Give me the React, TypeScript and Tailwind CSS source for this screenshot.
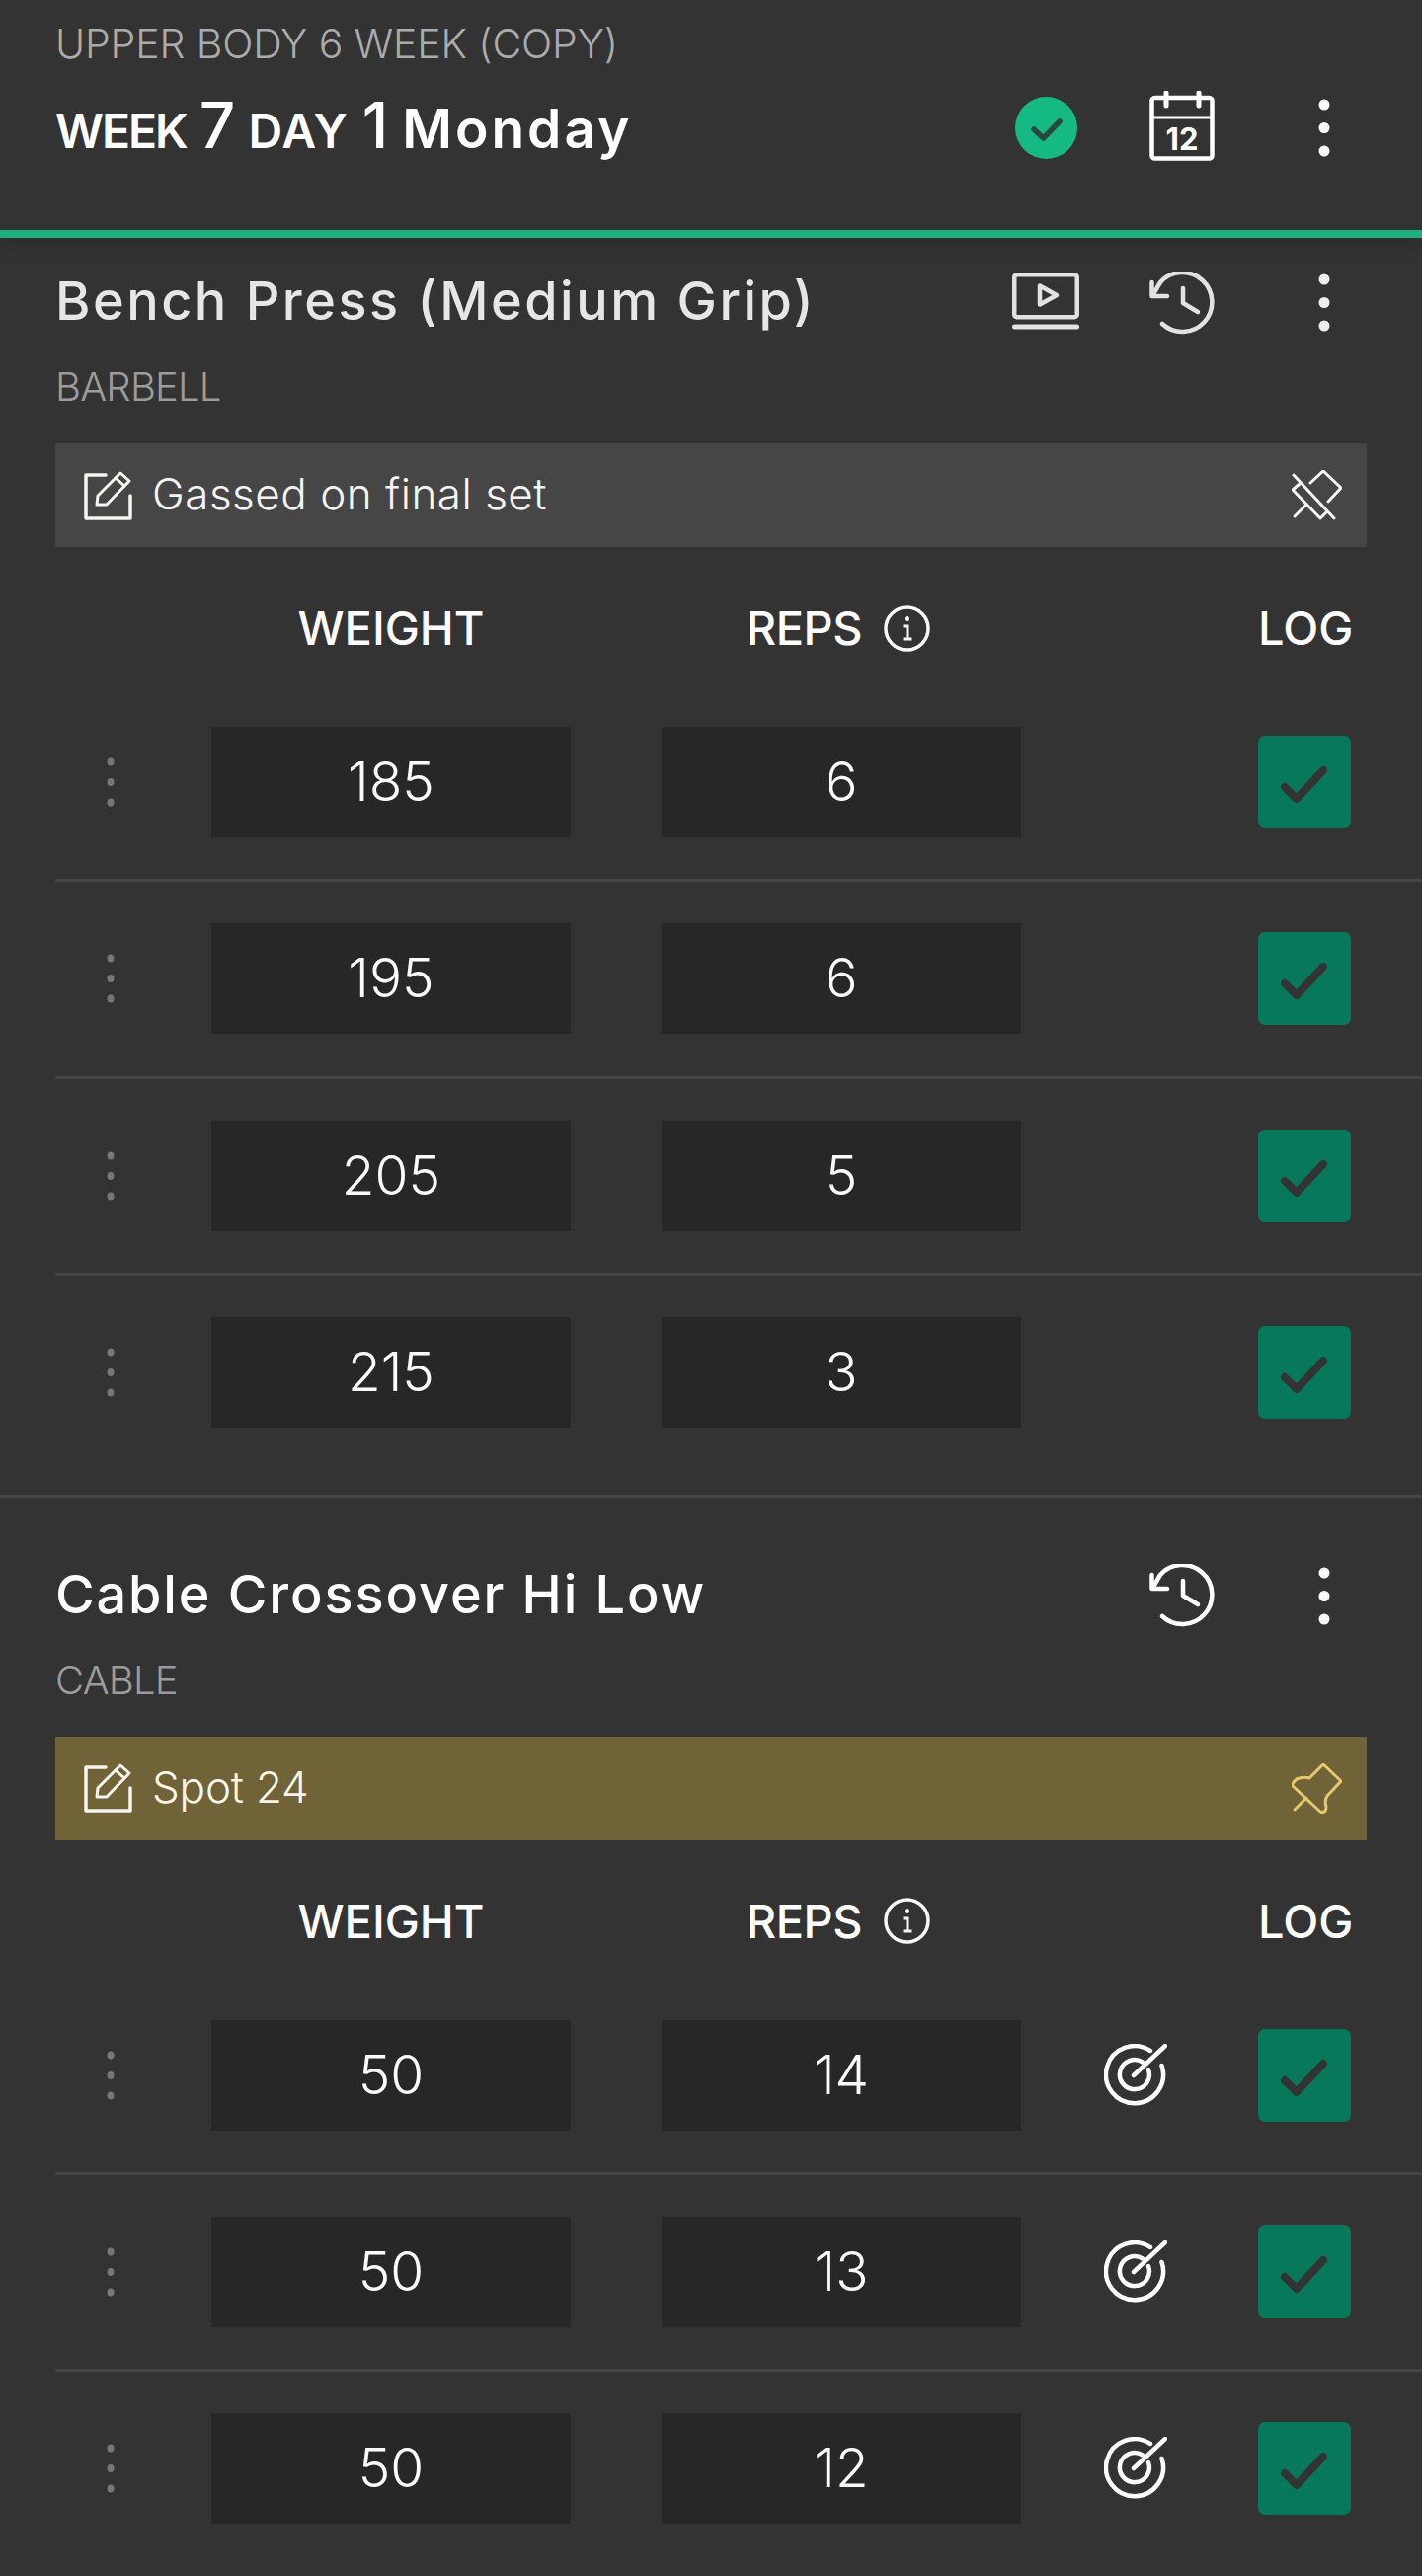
import React from "react";

function Kebab({ color = "#f5f5f5" }: { color?: string }) {
  return (
    <svg width="12" height="59" viewBox="0 0 12 59" fill={color}>
      <circle cx="6" cy="6" r="5.5" />
      <circle cx="6" cy="29.5" r="5.5" />
      <circle cx="6" cy="53" r="5.5" />
    </svg>
  );
}

function DoneCircle() {
  return (
    <svg width="63" height="63" viewBox="0 0 63 63">
      <circle cx="31.5" cy="31.5" r="31.5" fill="#15b983" />
      <path d="M19 33l9.5 9L45 25" fill="none" stroke="#27483f" strokeWidth="5.5" strokeLinecap="round" strokeLinejoin="round" />
    </svg>
  );
}

function Calendar() {
  return (
    <svg width="66" height="71" viewBox="0 0 66 71" fill="none" stroke="#fff">
      <rect x="2.5" y="7" width="61" height="61.5" rx="3" strokeWidth="4.5" />
      <path d="M2 27h62" strokeWidth="3" />
      <path d="M17 2v13M50 2v13" strokeWidth="5" strokeLinecap="round" />
      <text x="33" y="60" textAnchor="middle" fontSize="31" fontWeight="700" fill="#fff" stroke="none" fontFamily="Inter, sans-serif">12</text>
    </svg>
  );
}

function Video() {
  return (
    <svg width="68" height="58" viewBox="0 0 68 58" fill="none" stroke="#e2e2e2">
      <rect x="2.25" y="2.25" width="63.5" height="43" rx="2.5" strokeWidth="4.5" />
      <path d="M2.5 55h63" strokeWidth="5" strokeLinecap="round" />
      <path d="M28 13.5v19l17-9.5z" strokeWidth="4.5" strokeLinejoin="round" />
    </svg>
  );
}

function History({ color = "#e2e2e2" }: { color?: string }) {
  return (
    <svg width="66" height="64" viewBox="0 0 66 64" fill="none" stroke={color} strokeWidth="4.5" strokeLinecap="round" strokeLinejoin="round">
      <path d="M13 53A30 30 0 1 0 11 11L4 23" />
      <path d="M2.5 11v14H18" />
      <path d="M34 17v15l15 9" />
    </svg>
  );
}

function EditIcon() {
  return (
    <svg width="50" height="50" viewBox="0 0 50 50" fill="none" stroke="#f6f6f0" strokeWidth="3.5" strokeLinejoin="round" strokeLinecap="round">
      <path d="M23 4H3v44h45V25" />
      <path d="M15 25L38 2l9 8-23 24H14z" strokeWidth="3" />
      <path d="M33 7l9 8" strokeWidth="3" />
    </svg>
  );
}

function PinOffIcon() {
  return (
    <svg width="51" height="51" viewBox="0 0 51 51" fill="none" stroke="#f5f5f5" strokeWidth="3" strokeLinecap="round" strokeLinejoin="round">
      <path d="M2 5l41 44" />
      <path d="M19 13L32 1l18 17-13 14" />
      <path d="M8 14l-7 6 28 29 6-6" />
      <path d="M3 47l11-11" />
    </svg>
  );
}

function PinIcon() {
  return (
    <svg width="51" height="51" viewBox="0 0 51 51" fill="none" stroke="#e7c86f" strokeWidth="3" strokeLinecap="round" strokeLinejoin="round">
      <path d="M32 1l18 17-14 15q-3 5-1 11 0 7-6 5L1 23q-1-3 4-7 7-3 13-1z" />
      <path d="M3 47l12-12" />
    </svg>
  );
}

function InfoIcon() {
  return (
    <svg width="47" height="47" viewBox="0 0 47 47" fill="none" stroke="#f8f8f8" strokeWidth="3.5">
      <circle cx="23.5" cy="23.5" r="21.5" />
      <circle cx="23.5" cy="13.5" r="2.5" fill="#f8f8f8" stroke="none" />
      <path d="M19.5 21h4.5v13M19.5 34h9" strokeWidth="3" />
    </svg>
  );
}

function TargetIcon() {
  return (
    <svg width="64" height="64" viewBox="0 0 64 64" fill="none" stroke="#fbfbfb" strokeWidth="4.5" strokeLinecap="round">
      <path d="M47 7A29 29 0 1 0 58.500 22" />
      <path d="M39 18.500A15 15 0 1 0 45 26" />
      <path d="M30 32L62 2" />
    </svg>
  );
}

function LogButton() {
  return (
    <div className="w-[94px] h-[94px] rounded-[7px] bg-[#07785a] flex items-center justify-center">
      <svg width="94" height="94" viewBox="0 0 94 94" fill="none">
        <path d="M27 52l12 12 27-29" stroke="#333333" strokeWidth="8" strokeLinecap="round" strokeLinejoin="round" />
      </svg>
    </div>
  );
}

function DragHandle() {
  return (
    <svg width="8" height="50" viewBox="0 0 8 50" fill="#777777">
      <ellipse cx="4" cy="4.500" rx="3.500" ry="4" />
      <ellipse cx="4" cy="25" rx="3.500" ry="4" />
      <ellipse cx="4" cy="45.500" rx="3.500" ry="4" />
    </svg>
  );
}

function ValueBox({ value }: { value: string }) {
  return (
    <div className="w-[364px] h-[112px] pb-[1px] bg-[#272727] flex items-center justify-center text-[55px] leading-none font-light text-[#fafafa]">
      {value}
    </div>
  );
}

function SetRow({ weight, reps, target, last }: { weight: string; reps: string; target?: boolean; last?: boolean }) {
  return (
    <div className={last ? "ml-[56px] flex items-center pt-[42px]" : "ml-[56px] flex items-center pt-[42px] pb-[42.300px] border-b-[3px] border-[#454545]"}>
      <div className="w-[158px] pl-[52px] flex items-center">
        <DragHandle />
      </div>
      <ValueBox value={weight} />
      <div className="w-[92px]" />
      <ValueBox value={reps} />
      <div className="w-[232px] mr-[8px] flex items-center justify-center">{target ? <TargetIcon /> : null}</div>
      <LogButton />
    </div>
  );
}

function TableHeader() {
  return (
    <div className="h-[140px] pt-[24px] ml-[56px] flex items-center text-[47px] font-medium text-[#fdfdfd]">
      <div className="w-[158px]" />
      <div className="w-[364px] text-center">WEIGHT</div>
      <div className="w-[92px]" />
      <div className="w-[364px] flex items-center justify-center gap-[22px] pr-[6px]">
        <span className="tracking-[-0.5px]">REPS</span>
        <InfoIcon />
      </div>
      <div className="w-[240px]" />
      <div className="w-[94px] text-center whitespace-nowrap pr-[2px]">LOG</div>
    </div>
  );
}

function ExerciseHead({ title, kind, video, dim }: { title: string; kind: string; video?: boolean; dim?: boolean }) {
  return (
    <div className="flex items-start justify-between pl-[56px] pr-[24px]">
      <div className="flex flex-col">
        <div className={dim ? "h-[72px] leading-[72px] text-[54px] font-medium text-[#e6e6e6] tracking-[2.5px]" : "h-[72px] leading-[72px] text-[54px] font-medium text-white tracking-[1.9px]"}>
          {title}
        </div>
        <div className="mt-[23px] h-[56px] leading-[56px] text-[40px] font-light text-[#9c9c9c] tracking-[-0.8px]">{kind}</div>
      </div>
      <div className="flex items-center h-[72px] pt-[3px]">
        {video ? (
          <div className="w-[138px] flex justify-center -mt-[3px]">
            <Video />
          </div>
        ) : null}
        <div className="w-[138px] flex justify-center">
          <History color={dim ? "#e2e2e2" : "#ffffff"} />
        </div>
        <div className="w-[150px] flex justify-center">
          <Kebab color={dim ? "#eeeeee" : "#fafafa"} />
        </div>
      </div>
    </div>
  );
}

function Note({ text, pinned }: { text: string; pinned?: boolean }) {
  return (
    <div className={pinned ? "mt-[29px] mx-[56px] h-[105px] bg-[#716338] flex items-center justify-between pl-[28px] pr-[25px]" : "mt-[29px] mx-[56px] h-[105px] bg-[#464646] flex items-center justify-between pl-[28px] pr-[25px]"}>
      <div className={pinned ? "flex items-center gap-[20px] text-[44px] font-light text-[#f8f5e8] tracking-[-0.2px]" : "flex items-center gap-[20px] text-[44px] font-light text-[#f5f5f5] tracking-[0.5px]"}>
        <EditIcon />
        <span className="pb-[3px]">{text}</span>
      </div>
      {pinned ? <PinIcon /> : <PinOffIcon />}
    </div>
  );
}

export default function App() {
  return (
    <div className="w-[1440px] h-[2609px] overflow-hidden bg-[#333333] font-['Inter','Liberation_Sans',sans-serif]">
      <header className="relative h-[241px] border-b-[8px] border-[#1fb07f] shadow-[0_6px_18px_rgba(0,0,0,0.18)] flex items-start justify-between pl-[56px] pr-[24px]">
        <div className="flex flex-col">
          <div className="mt-[16px] h-[56px] leading-[56px] text-[41px] font-light text-[#ababab] tracking-[-0.15px]">UPPER BODY 6 WEEK (COPY)</div>
          <div className="mt-[7px] h-[80px] flex items-baseline font-semibold text-white">
            <span className="text-[48px] tracking-[-2px]">WEEK</span>
            <span className="ml-[13px] text-[64px] font-medium">7</span>
            <span className="ml-[13px] text-[48px] tracking-[1px]">DAY</span>
            <span className="ml-[14px] text-[64px] font-medium">1</span>
            <span className="ml-[14px] text-[55px] tracking-[3px]">Monday</span>
          </div>
        </div>
        <div className="h-[233px] flex items-start pt-[92px]">
          <div className="w-[138px] flex justify-center pt-[6px]">
            <DoneCircle />
          </div>
          <div className="w-[138px] flex justify-center">
            <Calendar />
          </div>
          <div className="w-[150px] flex justify-center pt-[8px]">
            <Kebab color="#fafafa" />
          </div>
        </div>
      </header>

      <section className="pt-[28px]">
        <ExerciseHead title="Bench Press (Medium Grip)" kind="BARBELL" video dim />
        <Note text="Gassed on final set" />
        <TableHeader />
        <SetRow weight="185" reps="6" />
        <SetRow weight="195" reps="6" />
        <SetRow weight="205" reps="5" />
        <SetRow weight="215" reps="3" last />
      </section>

      <section className="mt-[68px] border-t-[3px] border-[#454545] pt-[62px]">
        <ExerciseHead title="Cable Crossover Hi Low" kind="CABLE" />
        <Note text="Spot 24" pinned />
        <TableHeader />
        <SetRow weight="50" reps="14" target />
        <SetRow weight="50" reps="13" target />
        <SetRow weight="50" reps="12" target last />
      </section>
    </div>
  );
}
